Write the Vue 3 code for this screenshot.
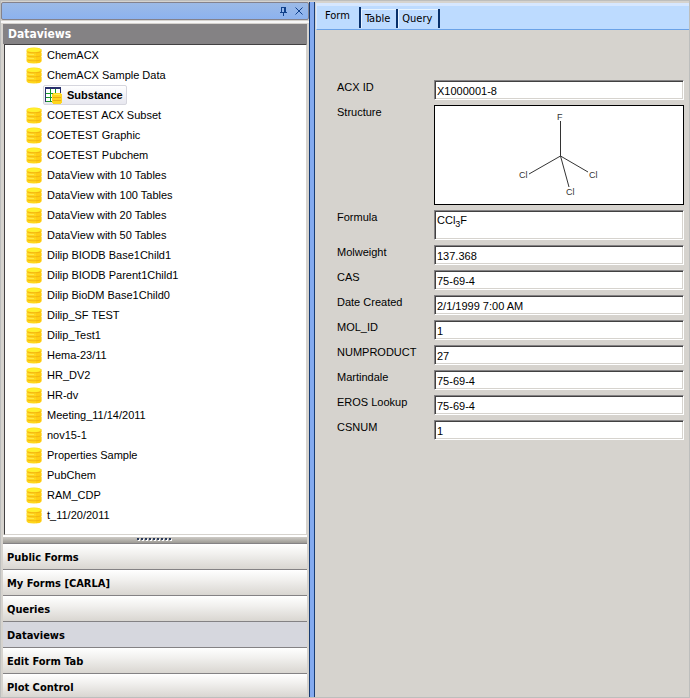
<script setup>
import { ref } from 'vue'

const nodes = [
  { name: 'ChemACX' },
  { name: 'ChemACX Sample Data', child: 'Substance' },
  { name: 'COETEST ACX Subset' },
  { name: 'COETEST Graphic' },
  { name: 'COETEST Pubchem' },
  { name: 'DataView with 10 Tables' },
  { name: 'DataView with 100 Tables' },
  { name: 'DataView with 20 Tables' },
  { name: 'DataView with 50 Tables' },
  { name: 'Dilip BIODB Base1Child1' },
  { name: 'Dilip BIODB Parent1Child1' },
  { name: 'Dilip BioDM Base1Child0' },
  { name: 'Dilip_SF TEST' },
  { name: 'Dilip_Test1' },
  { name: 'Hema-23/11' },
  { name: 'HR_DV2' },
  { name: 'HR-dv' },
  { name: 'Meeting_11/14/2011' },
  { name: 'nov15-1' },
  { name: 'Properties Sample' },
  { name: 'PubChem' },
  { name: 'RAM_CDP' },
  { name: 't_11/20/2011' }
]

const sections = ['Public Forms', 'My Forms [CARLA]', 'Queries', 'Dataviews', 'Edit Form Tab', 'Plot Control']
const activeSection = ref('Dataviews')

const tabs = ['Form', 'Table', 'Query']
const activeTab = ref('Form')

const acxId = ref('X1000001-8')
const fields = ref([
  { id: 'molweight', label: 'Molweight', value: '137.368' },
  { id: 'cas', label: 'CAS', value: '75-69-4' },
  { id: 'created', label: 'Date Created', value: '2/1/1999 7:00 AM' },
  { id: 'molid', label: 'MOL_ID', value: '1' },
  { id: 'numproduct', label: 'NUMPRODUCT', value: '27' },
  { id: 'martindale', label: 'Martindale', value: '75-69-4' },
  { id: 'eros', label: 'EROS Lookup', value: '75-69-4' },
  { id: 'csnum', label: 'CSNUM', value: '1' }
])
</script>

<template>
  <div class="app">
    <aside class="side">
      <div class="caption">
        <button class="cap-btn" type="button" aria-label="Pin">
          <svg width="8" height="9" viewBox="0 0 8 9" shape-rendering="crispEdges">
            <path d="M1 0h5v1H1zM1 1h1v4H1zM4 1h2v4H4zM0 5h7v1H0zM3 6h1v3H3z" fill="#10418c" />
          </svg>
        </button>
        <button class="cap-btn" type="button" aria-label="Close">
          <svg width="8" height="8" viewBox="0 0 8 8">
            <path d="M0.5 0.5l7 7M7.5 0.5l-7 7" stroke="#10418c" fill="none" />
          </svg>
        </button>
      </div>
      <div class="panel">
        <h1 class="heading">Dataviews</h1>
        <ul class="tree">
          <li v-for="n in nodes" :key="n.name">
            <div class="node">
              <svg width="16" height="17" viewBox="0 0 16 17">
                <path d="M0.5 3Q0.5 0.5 8 0.5T15.5 3V14Q15.5 16.500 8 16.500T0.5 14Z" fill="#ffd71c" />
                <path d="M10 2H15.5V14Q15 15.500 10 16.300Z" fill="#ffc60c" opacity="0.6" />
                <ellipse cx="8" cy="3" rx="7" ry="2" fill="#fff02c" />
                <path d="M1.5 5Q3 5.800 8 5.800T14.500 5M1.500 9Q3 9.800 8 9.800T14.500 9M1.500 13Q3 13.800 8 13.800T14.500 13" fill="none" stroke="#f0ae12" opacity="0.8" />
                <path d="M1 7Q3 7.500 8 7.500M1 11Q3 11.500 8 11.500" fill="none" stroke="#ffe94e" />
                <path d="M0 5.500H1M0 9.500H1M15 5.500H16M15 9.500H16" stroke="#fff3b0" />
              </svg>
              <span>{{ n.name }}</span>
            </div>
            <ul v-if="n.child" class="sub">
              <li class="node">
                <span class="chosen">
                  <svg width="17" height="17" viewBox="0 0 17 17" shape-rendering="crispEdges">
                    <rect x="0" y="0" width="16" height="15" fill="#fff" />
                    <path d="M5 2h1v13H5zM10 2h1v13h-1zM0 6h16v1H0zM0 10h16v1H0zM0 14h10v1H0z" fill="#189a29" />
                    <path d="M0 0H16V2H0zM0 2H1V15H0zM15 2H16V8H15z" fill="#29316b" />
                    <path d="M7 8Q7 6 12 6T17 8V15Q17 17 12 17T7 15Z" fill="#ffd51d" />
                    <path d="M8 10.500H16M8 13.500H16" fill="none" stroke="#e9aa12" />
                    <path d="M9 7.500H15" stroke="#fff04a" />
                  </svg>
                  <span>{{ n.child }}</span>
                </span>
              </li>
            </ul>
          </li>
        </ul>
        <div class="grip">
          <svg width="36" height="4" viewBox="0 0 36 4" shape-rendering="crispEdges">
            <g v-for="i in 9" :key="i">
              <rect :x="i * 4 - 3" y="1" width="2" height="2" fill="#fff" />
              <rect :x="i * 4 - 4" y="0" width="2" height="2" fill="#29395a" />
            </g>
          </svg>
        </div>
        <nav class="sections">
          <button
            v-for="s in sections"
            :key="s"
            type="button"
            class="section"
            :class="{ active: s === activeSection }"
            @click="activeSection = s"
          >{{ s }}</button>
        </nav>
      </div>
    </aside>
    <div class="divider"></div>
    <main class="main">
      <div class="tabs" role="tablist">
        <button
          v-for="t in tabs"
          :key="t"
          type="button"
          role="tab"
          class="tab"
          :class="{ active: t === activeTab }"
          :aria-selected="t === activeTab"
          @click="activeTab = t"
        >{{ t }}</button>
      </div>
      <form class="form" @submit.prevent>
        <label for="acx">ACX ID</label>
        <input id="acx" v-model="acxId" class="box" type="text" />
        <span>Structure</span>
        <div class="structure">
          <svg width="100" height="96" viewBox="0 0 100 96" role="img" aria-label="Structure">
            <path d="M51.500 15V50L20 68M51.500 50L79 66M51.500 50L60 81" fill="none" stroke="#333" />
            <g class="atoms">
              <text x="48" y="14">F</text>
              <text x="10" y="72">Cl</text>
              <text x="80" y="72">Cl</text>
              <text x="57" y="89">Cl</text>
            </g>
          </svg>
        </div>
        <label for="formula">Formula</label>
        <output id="formula" class="box formula">CCl<sub>3</sub>F</output>
        <template v-for="f in fields" :key="f.id">
          <label :for="f.id">{{ f.label }}</label>
          <input :id="f.id" v-model="f.value" class="box" type="text" />
        </template>
      </form>
    </main>
  </div>
</template>

<style>
body {
  background: #d6d3ce;
}
</style>

<style scoped>
.app {
  display: grid;
  grid-template-columns: minmax(200px, 309fr) 6px minmax(300px, 375fr);
  min-height: 100vh;
  box-sizing: border-box;
  border-top: 1px solid #bdbebd;
  border-bottom: 1px solid #bdbebd;
  font: 11px/14px "Liberation Sans", sans-serif;
  color: #000;
}
ul {
  list-style: none;
  margin: 0;
  padding: 0;
}
button {
  font: inherit;
  color: inherit;
  border: 0;
  padding: 0;
  background: none;
}
.side {
  display: flex;
  flex-direction: column;
  border-left: 1px solid #bdbebd;
}
.caption {
  display: flex;
  justify-content: flex-end;
  align-items: center;
  gap: 7px;
  height: 16px;
  margin-top: 1px;
  padding: 0 5px 0 0;
  border: 1px solid #84828c;
  border-radius: 2px;
  background: linear-gradient(#9cbae7, #8cb2ef);
}
.cap-btn {
  display: flex;
}
.panel {
  flex: 1;
  display: flex;
  flex-direction: column;
  margin-top: 1px;
  padding: 1px 2px 0;
  border-top: 2px solid #f7f7f7;
}
.heading {
  margin: 0;
  padding: 0 5px;
  background: #848284;
  color: #fff;
  font: bold 12px/20px "DejaVu Sans Condensed", sans-serif;
}
.tree {
  flex: 1;
  margin-left: 1px;
  padding: 0 0 0 21px;
  background: #fff;
  border: 1px solid #d6d3ce;
  border-top-color: #424142;
  border-left-color: #424142;
}
.node {
  display: flex;
  align-items: center;
  gap: 5px;
  height: 20px;
}
.sub {
  padding-left: 17px;
}
.chosen {
  display: flex;
  align-items: center;
  gap: 5px;
  height: 18px;
  padding: 0 3px 0 1px;
  border: 1px solid #d6d6de;
  border-radius: 2px;
  background: linear-gradient(#fff, #e7e7ef);
  font-weight: bold;
}
.grip {
  display: flex;
  justify-content: center;
  align-items: center;
  height: 6px;
  border-top: 2px solid #fff;
  background: linear-gradient(#cecbc6, #9c9a94);
}
.sections {
  display: flex;
  flex-direction: column;
}
.section {
  height: 26px;
  padding: 2px 4px 0;
  border-top: 1px solid #848284;
  background: linear-gradient(#fff, #f1f0ee 40%, #d9d6d1);
  font: bold 11px/23px "DejaVu Sans Condensed", sans-serif;
  text-align: left;
}
.section:last-child {
  height: 24px;
}
.section.active {
  background: #d6d7de;
}
.divider {
  background: #84aaef;
  border: solid #183c73;
  border-width: 0 1px;
  margin-top: 1px;
}
.main {
  margin-left: 1px;
  border-right: 1px solid #bdbebd;
}
.tabs {
  display: flex;
  align-items: flex-end;
  height: 22px;
  margin-top: 2px;
  padding-bottom: 1px;
  border: solid #d6e7ff;
  border-width: 3px 0 0 1px;
  border-bottom: 1px solid #6ba2e7;
  background: #bddbff;
  font: 11px/14px "DejaVu Sans Condensed", sans-serif;
}
.tab {
  height: 19px;
  padding: 0 6px 0 4px;
  border-right: 2px solid #08306b;
  box-shadow: inset 1px 1px #e7f3ff;
}
.tab.active {
  height: 21px;
  padding: 0 9px 3px 8px;
  box-shadow: none;
}
.form {
  display: grid;
  grid-template-columns: 97px 1fr;
  gap: 5px 0;
  padding: 50px 5px 10px 21px;
}
.box {
  box-sizing: border-box;
  width: 100%;
  min-width: 0;
  height: 20px;
  padding: 2px 2px 0;
  border: 1px solid;
  border-color: #848284 #fff #fff #848284;
  box-shadow: inset 1px 1px #424142, inset -1px -1px #d6d3ce;
  background: #fff;
  font: 11px/14px "Liberation Sans", sans-serif;
  color: #000;
  border-radius: 0;
  outline: 0;
}
.formula {
  height: 30px;
}
.formula sub {
  font-size: 9px;
  line-height: 1px;
  vertical-align: -3px;
}
.structure {
  display: flex;
  justify-content: center;
  height: 98px;
  border: 1px solid #000;
  background: #fff;
}
.atoms {
  font: 9px "Liberation Sans", sans-serif;
  fill: #333;
}
</style>
